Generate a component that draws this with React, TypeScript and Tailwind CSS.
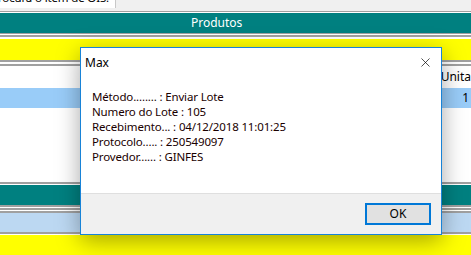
import { X } from 'lucide-react'

const linhas = [
  'Método........ : Enviar Lote',
  'Numero do Lote : 105',
  'Recebimento... : 04/12/2018 11:01:25',
  'Protocolo..... : 250549097',
  'Provedor...... : GINFES',
]

function Linha({ cls }: { cls: string }) {
  return <div className={`w-full shrink-0 ${cls}`} />
}

export default function App() {
  return (
    <div className="relative w-[471px] h-[255px] overflow-hidden bg-white text-[12px] text-black" style={{ fontFamily: '"Noto Sans", "Open Sans", sans-serif' }}>
      {/* ── Tela de fundo ─────────────────────────────────── */}
      <div className="flex flex-col">
        <div className="flex h-[8px] bg-[#f0f0f0]">
          <div className="w-[116px] bg-white border-r border-[#c8c8c8] relative overflow-hidden">
            <span className="absolute right-[6px] top-[-10px] whitespace-nowrap leading-[15px] text-[11.5px] tracking-[-0.15px]">Procura o item de OIS.</span>
          </div>
        </div>
        <Linha cls="h-[3px] bg-[#f0f0f0]" />
        <Linha cls="h-[1px] bg-[#a0a0a0]" />
        <Linha cls="h-[1px] bg-white" />
        <div className="h-[20px] bg-[#008080] text-white flex items-center pl-[191px] leading-none">Produtos</div>
        <Linha cls="h-[1px] bg-[#a0a0a0]" />
        <Linha cls="h-[1px] bg-white" />
        <Linha cls="h-[2px] bg-[#a0a0a0]" />
        <Linha cls="h-[2px] bg-white" />
        <Linha cls="h-[21px] bg-[#ffff00]" />
        <Linha cls="h-[2px] bg-[#a0a0a0]" />
        <Linha cls="h-[2px] bg-white" />
        <Linha cls="h-[2px] bg-[#a0a0a0]" />
        <div className="h-[22px] bg-white flex">
          <div className="w-[444px]" />
          <div className="border-l border-[#d8d8d8] pl-[2px] flex items-center">Unita</div>
        </div>
        <div className="h-[20px] bg-[#99ccf8] flex items-center justify-end pr-[2px]">1</div>
        <Linha cls="h-[74px] bg-white" />
        <Linha cls="h-[2px] bg-[#a0a0a0]" />
        <Linha cls="h-[1px] bg-white" />
        <Linha cls="h-[20px] bg-[#008080]" />
        <Linha cls="h-[2px] bg-[#a0a0a0]" />
        <Linha cls="h-[1px] bg-white" />
        <Linha cls="h-[2px] bg-[#a0a0a0]" />
        <Linha cls="h-[1px] bg-white" />
        <Linha cls="h-[2px] bg-[#a0a0a0]" />
        <Linha cls="h-[19px] bg-[#bcd8f2]" />
        <Linha cls="h-[2px] bg-[#a0a0a0]" />
        <Linha cls="h-[1px] bg-white" />
        <Linha cls="h-[20px] bg-[#ffff00]" />
      </div>

      {/* ── Caixa de mensagem ─────────────────────────────── */}
      <div className="absolute left-[80px] top-[47px] w-[362px] h-[188px] border border-[#1883d7] bg-white flex flex-col shadow-[0_6px_22px_rgba(0,0,0,0.35)]">
        <div className="h-[29px] flex items-center justify-between pl-[4px] pr-[8px]">
          <span>Max</span>
          <X className="w-[15px] h-[15px]" strokeWidth={1.1} />
        </div>
        <div className="flex-1 pl-[11px] pt-[12px] leading-[15px] text-[11.5px] tracking-[-0.15px] text-[#1a0000]">
          {linhas.map(l => (
            <div key={l} className="whitespace-pre">{l}</div>
          ))}
        </div>
        <div className="h-[41px] bg-[#f0f0f0] border-t border-[#dfdfdf] flex items-start justify-end pr-[10px] pt-[9px]">
          <button className="w-[66px] h-[22px] border-2 border-[#0078d7] bg-[#e1e1e1] flex items-center justify-center leading-none">
            OK
          </button>
        </div>
      </div>
    </div>
  )
}
